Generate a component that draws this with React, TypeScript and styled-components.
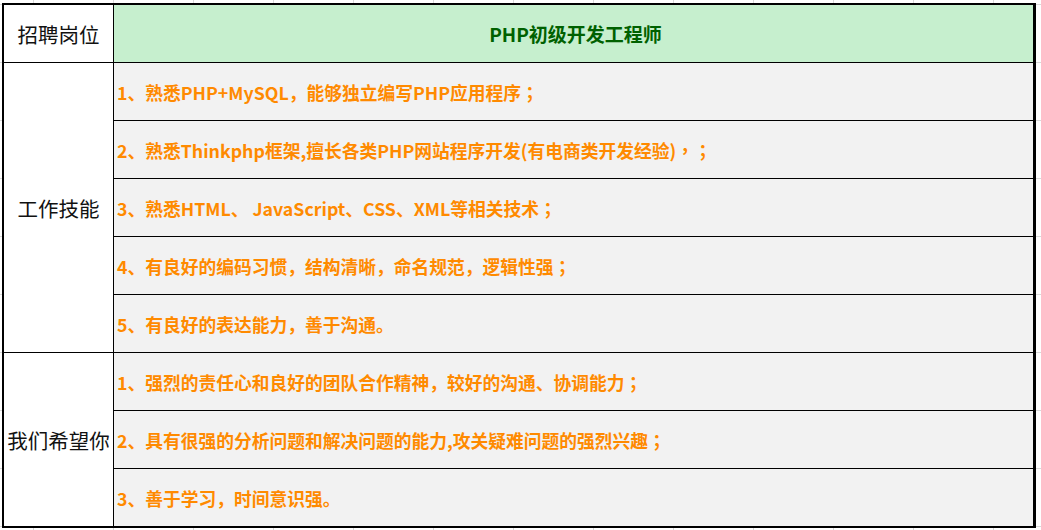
import React from 'react';
import styled, { createGlobalStyle } from 'styled-components';

const GlobalStyle = createGlobalStyle`
  html, body {
    margin: 0;
    padding: 0;
  }
  body {
    width: 1041px;
    height: 530px;
    overflow: hidden;
    background-color: #fff;
    background-image:
      linear-gradient(to right, #d9d9d9 1px, transparent 1px),
      linear-gradient(to bottom, #d9d9d9 1px, transparent 1px);
    background-size: 80px 58px;
    background-position: 33px 4px;
    font-family: "Noto Sans CJK SC", "Noto Sans", sans-serif;
  }
`;

const Page = styled.div`
  padding: 3px 0 0 2px;
`;

const Sheet = styled.div`
  width: 1034px;
  box-sizing: border-box;
  border: 2px solid #000;
  border-right-width: 3px;
  display: grid;
  grid-template-columns: 109px 1fr;
  grid-template-rows: repeat(9, 57px);
  gap: 1px;
  background: #000;
`;

const LabelCell = styled.div<{ $span?: number }>`
  grid-row: span ${(p) => p.$span ?? 1};
  background: #fff;
  display: flex;
  align-items: center;
  justify-content: center;
  font-size: 20.5px;
  color: #111;
  white-space: nowrap;
`;

const TitleCell = styled.div`
  background: #c6efce;
  color: #006100;
  font-weight: 700;
  font-size: 19px;
  display: flex;
  align-items: center;
  justify-content: center;
  padding-left: 4px;
`;

const ItemCell = styled.div`
  grid-column: 2;
  background: #f2f2f2;
  color: #ff8a00;
  font-weight: 700;
  font-size: 17.75px;
  display: flex;
  align-items: center;
  padding-left: 3px;
  white-space: pre;
`;

/* centred full-width punctuation, as the sheet's font draws it */
const Punct = styled.span`
  font-family: "Noto Sans CJK TC", "Noto Sans CJK SC", sans-serif;
`;

const withPunct = (text: string) =>
  text.split(/(；)/).map((part, i) => (part === '；' ? <Punct key={i}>；</Punct> : part));

const skills: React.ReactNode[] = [
  withPunct('1、熟悉PHP+MySQL，能够独立编写PHP应用程序；'),
  <>
    2、熟悉Thinkphp框架,擅长各类PHP网站程序开发(有电商类开发经验)<Punct>，</Punct>  <Punct>；</Punct>
  </>,
  withPunct('3、熟悉HTML、 JavaScript、CSS、XML等相关技术；'),
  withPunct('4、有良好的编码习惯，结构清晰，命名规范，逻辑性强；'),
  '5、有良好的表达能力，善于沟通。',
];

const hopes: React.ReactNode[] = [
  withPunct('1、强烈的责任心和良好的团队合作精神，较好的沟通、协调能力；'),
  withPunct('2、具有很强的分析问题和解决问题的能力,攻关疑难问题的强烈兴趣；'),
  '3、善于学习，时间意识强。',
];

export default function App() {
  return (
    <>
      <GlobalStyle />
      <Page>
        <Sheet>
          <LabelCell>招聘岗位</LabelCell>
          <TitleCell>PHP初级开发工程师</TitleCell>

          <LabelCell $span={skills.length}>工作技能</LabelCell>
          {skills.map((s, i) => (
            <ItemCell key={'s' + i}>{s}</ItemCell>
          ))}

          <LabelCell $span={hopes.length}>我们希望你</LabelCell>
          {hopes.map((s, i) => (
            <ItemCell key={'h' + i}>{s}</ItemCell>
          ))}
        </Sheet>
      </Page>
    </>
  );
}
